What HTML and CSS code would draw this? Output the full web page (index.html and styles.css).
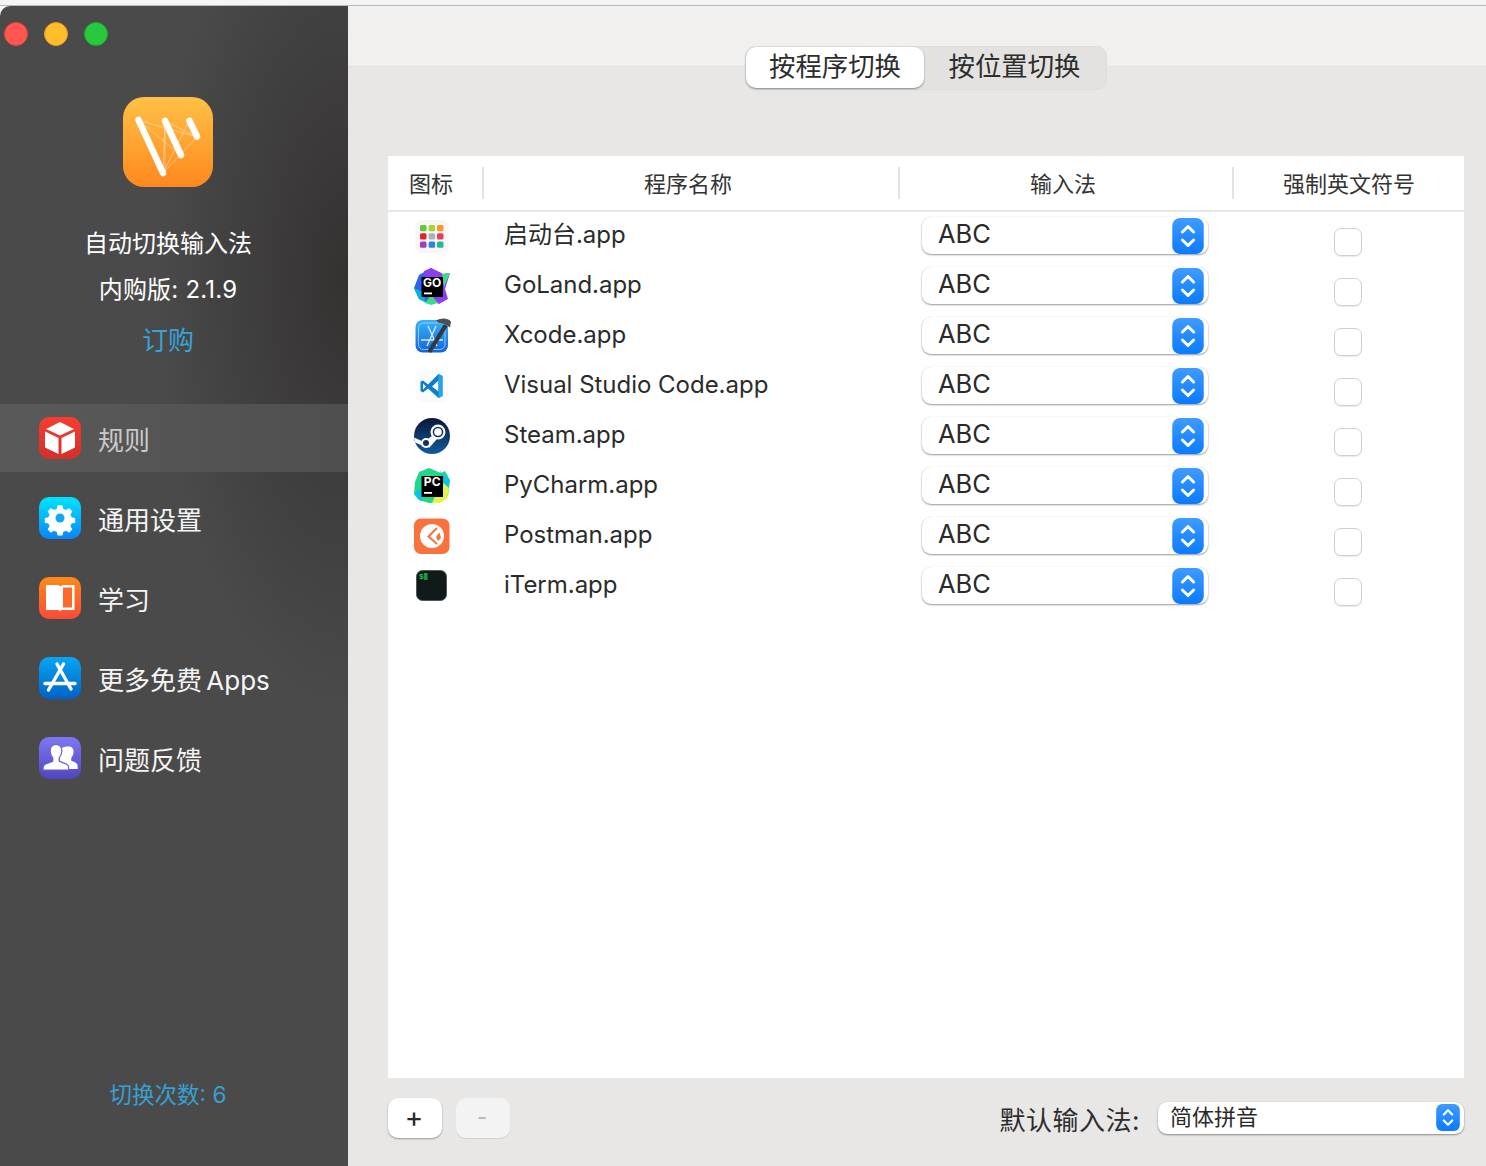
FILE: index.html
```html
<!DOCTYPE html>
<html lang="zh-CN">
<head>
<meta charset="utf-8">
<title>自动切换输入法</title>
<link rel="stylesheet" href="styles.css">
</head>
<body>
<svg class="defs" width="0" height="0" aria-hidden="true">
  <defs>
    <linearGradient id="gLogo" x1="0" y1="0" x2="0" y2="1"><stop offset="0" stop-color="#ffc145"/><stop offset="1" stop-color="#ff881f"/></linearGradient>
    <linearGradient id="gRed" x1="0" y1="0" x2="0" y2="1"><stop offset="0" stop-color="#f63d30"/><stop offset="1" stop-color="#d3302b"/></linearGradient>
    <linearGradient id="gCyan" x1="0" y1="0" x2="0" y2="1"><stop offset="0" stop-color="#00e4fb"/><stop offset="1" stop-color="#0a84ff"/></linearGradient>
    <linearGradient id="gOrange" x1="0" y1="0" x2="0" y2="1"><stop offset="0" stop-color="#ff8a16"/><stop offset="1" stop-color="#fb4a3c"/></linearGradient>
    <linearGradient id="gBlue" x1="0" y1="0" x2="0" y2="1"><stop offset="0" stop-color="#07a6f2"/><stop offset="1" stop-color="#0062c8"/></linearGradient>
    <linearGradient id="gViolet" x1="0" y1="0" x2="0" y2="1"><stop offset="0" stop-color="#7f78f5"/><stop offset="1" stop-color="#4f46bd"/></linearGradient>
    <linearGradient id="gXcode" x1="0" y1="0" x2="0" y2="1"><stop offset="0" stop-color="#35b4f6"/><stop offset="1" stop-color="#1662e0"/></linearGradient>
    <linearGradient id="gSteam" x1="0" y1="0" x2="0" y2="1"><stop offset="0" stop-color="#0c1638"/><stop offset="1" stop-color="#0f5b9c"/></linearGradient>
    <linearGradient id="gStep" x1="0" y1="0" x2="0" y2="1"><stop offset="0" stop-color="#3f9bff"/><stop offset="1" stop-color="#0a7bff"/></linearGradient>
    <filter id="fGlow" x="-40%" y="-40%" width="180%" height="180%"><feGaussianBlur stdDeviation="0.7"/></filter>
    <symbol id="stepper" viewBox="0 0 28 32">
      <rect width="28" height="32" rx="7" fill="url(#gStep)"/>
      <path d="M9 12.500 14 7.500l5 5M9 19.500l5 5 5-5" fill="none" stroke="#fff" stroke-width="2.600" stroke-linecap="round" stroke-linejoin="round"/>
    </symbol>
  </defs>
</svg>

<div class="top-strip"></div>
<div class="window">
  <aside class="sidebar">
    <div class="lights">
      <span class="light light-red"></span>
      <span class="light light-yellow"></span>
      <span class="light light-green"></span>
    </div>
    <svg class="logo" viewBox="0 0 90 90" width="90" height="90">
      <rect width="90" height="90" rx="21" fill="url(#gLogo)"/>
      <g stroke="#ffe9cf" stroke-width=".6" fill="none" opacity=".85">
        <path d="M15 23 74 40 40 76 42 24 74 40"/>
        <path d="M40 76 66 24M15 23 58 58M42 24 42 76"/>
      </g>
      <g stroke="#fff" stroke-width="6.500" stroke-linecap="round" filter="url(#fGlow)">
        <path d="M15.500 23 40 76"/>
        <path d="M42 24 58 58"/>
        <path d="M66.500 24 74 39.500"/>
      </g>
    </svg>
    <div class="app-title">自动切换输入法</div>
    <div class="app-version">内购版: 2.1.9</div>
    <div class="app-buy">订购</div>

    <nav class="nav">
      <div class="nav-item is-active">
        <svg class="nav-icon" viewBox="0 0 42 42" width="42" height="42">
          <rect width="42" height="42" rx="10" fill="url(#gRed)"/>
          <path d="M21 5 35 12 21 18.500 7 12Z" fill="#fff"/>
          <path d="M6 14.500 19.500 21V37L6 30.500Z" fill="#fff"/>
          <path d="M36 14.500 22.500 21V37L36 30.500Z" fill="#fff"/>
        </svg>
        <span class="nav-label">规则</span>
      </div>
      <div class="nav-item">
        <svg class="nav-icon" viewBox="0 0 42 42" width="42" height="42">
          <rect width="42" height="42" rx="10" fill="url(#gCyan)"/>
          <path d="M18 5h6l1 4.500 3.500 1.500 4-2.500 4 4.500-2.500 3.700 1.500 3.300 4.500 1v6l-4.500 1-1.500 3.300 2.500 3.700-4 4.500-4-2.500-3.500 1.500-1 4.500h-6l-1-4.500-3.500-1.500-4 2.500-4-4.500 2.500-3.700-1.500-3.300-4.500-1v-6l4.500-1 1.500-3.300-2.500-3.700 4-4.500 4 2.500 3.500-1.500z" fill="#fff" transform="translate(4.200 4.200) scale(.8)"/>
          <circle cx="21" cy="21" r="4.500" fill="#0ea8f8"/>
        </svg>
        <span class="nav-label">通用设置</span>
      </div>
      <div class="nav-item">
        <svg class="nav-icon" viewBox="0 0 42 42" width="42" height="42">
          <rect width="42" height="42" rx="10" fill="url(#gOrange)"/>
          <path d="M7 8h12.500l2 1.500 2-1.500H35.500V33H23l-2 1-2-1H7Z" fill="#fff"/>
          <rect x="24" y="10.500" width="9" height="20" fill="#fb6a2a"/>
        </svg>
        <span class="nav-label">学习</span>
      </div>
      <div class="nav-item">
        <svg class="nav-icon" viewBox="0 0 42 42" width="42" height="42">
          <rect width="42" height="42" rx="10" fill="url(#gBlue)"/>
          <g stroke="#fff" stroke-width="3.400" stroke-linecap="round" fill="none">
            <path d="M24.500 7 9.500 33"/>
            <path d="M18 7 32 32"/>
            <path d="M6 26.500H36"/>
          </g>
        </svg>
        <span class="nav-label nav-label-mixed">更多免费 Apps</span>
      </div>
      <div class="nav-item">
        <svg class="nav-icon" viewBox="0 0 42 42" width="42" height="42">
          <rect width="42" height="42" rx="10" fill="url(#gViolet)"/>
          <path d="M30 9.500c3.200 0 5 2.800 4.500 6-.3 2.500-1.300 4.400-2.300 5.500v2.500c1 1 5.800 1.800 6.300 4.300.2 1.200.2 3.200.2 4.200H29c0-3-2-5-8-6.500V20c-1-1.500-1.200-3-1-5 .4-3 2.500-5.500 10-5.500Z" fill="#fff"/>
          <path d="M17 7.500c4 0 6.200 3 5.800 7-.3 3-1.300 5-2.600 6.300V24c1.300 1.500 7.300 2 8.800 4.500.7 1.300.8 3.500.8 4.500H4c0-1 .1-3.200.8-4.500C6.300 26 12.500 25.500 13.800 24v-3.200c-1.300-1.300-2.300-3.300-2.600-6.300-.4-4 1.800-7 5.800-7Z" fill="#fff" stroke="#6660dc" stroke-width="1.200"/>
        </svg>
        <span class="nav-label">问题反馈</span>
      </div>
    </nav>

    <div class="switch-count">切换次数: 6</div>
  </aside>

  <main class="main">
    <header class="titlebar">
      <div class="segmented">
        <div class="segment is-active">按程序切换</div>
        <div class="segment">按位置切换</div>
      </div>
    </header>

    <section class="content">
      <div class="table">
        <div class="table-head">
          <div class="th th-icon">图标</div>
          <div class="th th-name">程序名称</div>
          <div class="th th-input">输入法</div>
          <div class="th th-force">强制英文符号</div>
        </div>

        <div class="row">
          <svg class="app-icon" viewBox="0 0 36 36" width="36" height="36">
            <rect x="1.500" y="2" width="33" height="33" rx="7" fill="#f6f6f6"/>
            <rect x="6" y="7" width="6.500" height="6.200" rx="1.500" fill="#5fca3c"/>
            <rect x="14.600" y="7" width="6.500" height="6.200" rx="1.500" fill="#a9d334"/>
            <rect x="23" y="7" width="6.500" height="6.200" rx="1.500" fill="#f59a23"/>
            <rect x="6" y="15.300" width="6.500" height="6.200" rx="1.500" fill="#df2427"/>
            <rect x="14.600" y="15.300" width="6.500" height="6.200" rx="1.500" fill="#aab2b2"/>
            <rect x="23" y="15.300" width="6.500" height="6.200" rx="1.500" fill="#ee3a63"/>
            <rect x="6" y="23.600" width="6.500" height="6.200" rx="1.500" fill="#9a3fc2"/>
            <rect x="14.600" y="23.600" width="6.500" height="6.200" rx="1.500" fill="#2a85e2"/>
            <rect x="23" y="23.600" width="6.500" height="6.200" rx="1.500" fill="#25b98f"/>
          </svg>
          <div class="app-name">启动台.app</div>
          <div class="select"><span class="select-text">ABC</span><svg class="stepper" width="32" height="36"><use href="#stepper"/></svg></div>
          <div class="check-cell"><span class="checkbox"></span></div>
        </div>

        <div class="row">
          <svg class="app-icon" viewBox="0 0 36 36" width="36" height="36">
            <path d="M0 20 5 7 12 3 17 0 29 6 27 24 16 36 5 31Z" fill="#2f62ee"/>
            <path d="M10 3 17 0 29 6 36 5 31 21 34 31 25 36 14 30Z" fill="#8c3ef0"/>
            <path d="M28 6 36 5 30 19Z" fill="#3ddc84"/>
            <path d="M0 20 9 24 12 35 5 31Z" fill="#07b4d8"/>
            <path d="M11 35 17 27 24 35 17 37Z" fill="#3ddc84"/>
            <rect x="7.500" y="9" width="21.500" height="20" fill="#000"/>
            <text class="ide-text" x="18.200" y="19">GO</text>
            <rect x="10" y="24.500" width="8" height="1.800" fill="#fff"/>
          </svg>
          <div class="app-name">GoLand.app</div>
          <div class="select"><span class="select-text">ABC</span><svg class="stepper" width="32" height="36"><use href="#stepper"/></svg></div>
          <div class="check-cell"><span class="checkbox"></span></div>
        </div>

        <div class="row">
          <svg class="app-icon" viewBox="0 0 36 36" width="36" height="36">
            <rect x="1.500" y="2" width="32.500" height="32.500" rx="7" fill="url(#gXcode)"/>
            <rect x="4.500" y="5" width="26.500" height="26.500" rx="5" fill="none" stroke="#a5dcff" stroke-width=".8"/>
            <g stroke="#cfeaff" stroke-width="1.400" fill="none">
              <path d="M14 8 23 28M22 8 13 28M7 22H29"/>
            </g>
            <path d="M30 6 33.500 8.500 17 35 13.500 33Z" fill="#33373e"/>
            <path d="M22 2.500C27 0 33-.5 37 3.500L36 9.500 31 6 25 5Z" fill="#4a4f58"/>
          </svg>
          <div class="app-name">Xcode.app</div>
          <div class="select"><span class="select-text">ABC</span><svg class="stepper" width="32" height="36"><use href="#stepper"/></svg></div>
          <div class="check-cell"><span class="checkbox"></span></div>
        </div>

        <div class="row">
          <svg class="app-icon" viewBox="0 0 36 36" width="36" height="36">
            <rect x="1.500" y="2" width="33" height="33" rx="7" fill="#fbfbfb"/>
            <path d="M24.500 6 28.500 8V28L24.500 30 14 20.500 9 24.500 6.500 23V13.500L9 12.500 14 16.500Z" fill="#0a7fd0"/>
            <path d="M24.500 12.500 18 18.500 24.500 23.500Z" fill="#fff"/>
            <path d="M9 15.500 12 18.500 9 21.500Z" fill="#fff"/>
            <path d="M24.500 6 28.500 8V28L24.500 30Z" fill="#25a3ec"/>
          </svg>
          <div class="app-name">Visual Studio Code.app</div>
          <div class="select"><span class="select-text">ABC</span><svg class="stepper" width="32" height="36"><use href="#stepper"/></svg></div>
          <div class="check-cell"><span class="checkbox"></span></div>
        </div>

        <div class="row">
          <svg class="app-icon" viewBox="0 0 36 36" width="36" height="36">
            <circle cx="18" cy="18" r="18" fill="url(#gSteam)"/>
            <path d="M0 19.500 10 24 19 17 23 21 15.500 29.500 9 29 7 27 1.200 24.500Z" fill="#fff"/>
            <circle cx="24" cy="14" r="7.500" fill="#fff"/>
            <circle cx="24" cy="14" r="5.300" fill="#17305f"/>
            <circle cx="24" cy="14" r="3.800" fill="#fff"/>
            <circle cx="12" cy="25" r="5" fill="#fff"/>
            <circle cx="12" cy="25" r="3" fill="#17305f"/>
          </svg>
          <div class="app-name">Steam.app</div>
          <div class="select"><span class="select-text">ABC</span><svg class="stepper" width="32" height="36"><use href="#stepper"/></svg></div>
          <div class="check-cell"><span class="checkbox"></span></div>
        </div>

        <div class="row">
          <svg class="app-icon" viewBox="0 0 36 36" width="36" height="36">
            <path d="M1 14 5 4 15 0 27 5 31 3 36 12 34 28 25 35 15 35 5 32 0 26Z" fill="#21d789"/>
            <path d="M26 2 28 6 36 12 34 20 28 12Z" fill="#07c3f2"/>
            <path d="M18 35 28 14 35 20 33 31 25 35Z" fill="#e8f24a"/>
            <path d="M0 26 6 20 8 33 5 32Z" fill="#07c3f2"/>
            <rect x="7.500" y="8" width="21.500" height="21" fill="#000"/>
            <text class="ide-text" x="18.200" y="18">PC</text>
            <rect x="10" y="24" width="8" height="1.800" fill="#fff"/>
          </svg>
          <div class="app-name">PyCharm.app</div>
          <div class="select"><span class="select-text">ABC</span><svg class="stepper" width="32" height="36"><use href="#stepper"/></svg></div>
          <div class="check-cell"><span class="checkbox"></span></div>
        </div>

        <div class="row">
          <svg class="app-icon" viewBox="0 0 36 36" width="36" height="36">
            <rect y="0.500" width="35.500" height="35.500" rx="7" fill="#f9723d"/>
            <circle cx="18" cy="18" r="12" fill="#fff"/>
            <path d="M23 10 14.500 18.500 23 26" fill="none" stroke="#f9723d" stroke-width="2"/>
            <path d="M25.500 14.500 27 20 24 23 22 19Z" fill="#f9723d"/>
          </svg>
          <div class="app-name">Postman.app</div>
          <div class="select"><span class="select-text">ABC</span><svg class="stepper" width="32" height="36"><use href="#stepper"/></svg></div>
          <div class="check-cell"><span class="checkbox"></span></div>
        </div>

        <div class="row">
          <svg class="app-icon" viewBox="0 0 36 36" width="36" height="36">
            <rect x="2.500" y="2.500" width="30" height="30" rx="6" fill="#111a1a" stroke="#555" stroke-width="1"/>
            <text class="term-text" x="5" y="10.500">$</text>
            <rect x="10" y="5" width="3.600" height="7" fill="#149a3f"/>
          </svg>
          <div class="app-name">iTerm.app</div>
          <div class="select"><span class="select-text">ABC</span><svg class="stepper" width="32" height="36"><use href="#stepper"/></svg></div>
          <div class="check-cell"><span class="checkbox"></span></div>
        </div>
      </div>

      <footer class="footer">
        <div class="btn">+</div>
        <div class="btn is-disabled">-</div>
        <div class="spacer"></div>
        <div class="default-label">默认输入法:</div>
        <div class="select select-small"><span class="select-text">简体拼音</span><svg class="stepper" width="24" height="27"><use href="#stepper"/></svg></div>
      </footer>
    </section>
  </main>
</div>
</body>
</html>
```

FILE: styles.css
```css
* { box-sizing: border-box; }
html, body { margin: 0; padding: 0; }
body {
  width: 1486px;
  height: 1166px;
  overflow: hidden;
  background: #f6f6f6;
  font-family: Inter, "Noto Sans CJK SC", sans-serif;
  color: #2a2a2a;
}
.defs { display: block; height: 0; }
.top-strip { height: 6px; border-bottom: 1px solid #b9b9b9; background: #f4f4f4; }
.window { display: flex; height: 1160px; }

.sidebar {
  width: 348px;
  flex: none;
  display: flex;
  flex-direction: column;
  align-items: center;
  padding-right: 12px;
  border-top-left-radius: 10px;
  color: #fff;
  background:
    radial-gradient(ellipse 190px 430px at 100% 270px, #343131 0%, rgba(52,49,49,0) 100%),
    #4a4a4a;
}
.lights { align-self: flex-start; display: flex; gap: 16px; padding: 16px 0 0 4px; }
.light { width: 24px; height: 24px; border-radius: 50%; }
.light-red { background: #ff5652; border: 1px solid #e0443e; }
.light-yellow { background: #ffbd2a; border: 1px solid #dea123; }
.light-green { background: #28c83f; border: 1px solid #1aab29; }
.logo { display: block; margin-top: 51px; }
.app-title { margin-top: 40px; font-size: 24px; line-height: 34px; }
.app-version { margin-top: 12px; font-size: 24px; line-height: 34px; letter-spacing: .2px; }
.app-buy { margin-top: 15px; font-size: 26px; line-height: 38px; color: #37a3d6; }

.nav { align-self: stretch; margin: 44px -12px 0 0; display: flex; flex-direction: column; gap: 12px; }
.nav-item { display: flex; align-items: center; height: 68px; padding-left: 39px; gap: 17px; }
.nav-item.is-active { background: linear-gradient(90deg, #5a5a5a, #4f4f4f); }
.nav-item.is-active .nav-label { color: #c9c9c9; }
.nav-icon { flex: none; position: relative; top: 0; }
.nav-label { font-size: 26px; line-height: 36px; color: #f5f5f5; position: relative; top: 3px; }
.nav-label-mixed { word-spacing: -3px; }
.switch-count { margin-top: auto; margin-bottom: 55px; font-size: 22.500px; line-height: 32px; color: #37a0d2; }

.main { flex: 1; display: flex; flex-direction: column; padding: 0; }
.titlebar {
  position: relative;
  z-index: 1;
  height: 61px;
  flex: none;
  display: flex;
  justify-content: center;
  align-items: flex-start;
  padding: 40px 22px 0 40px;
  background: #f1f0ef;
  border-bottom: 1px solid #e2e1df;
}
.segmented {
  flex: none;
  display: flex;
  height: 44px;
  width: 362px;
  padding: 1px;
  border-radius: 11px;
  background: #e3e2e0;
  box-shadow: inset 0 0 0 1px #dededc;
}
.segment { flex: none; width: 178px; text-align: center; font-size: 26.400px; line-height: 39px; color: #2d2d2d; }
.segment + .segment { width: 181px; }
.segment.is-active { background: #fff; border-radius: 10px; box-shadow: 0 1px 2px rgba(0,0,0,.4); height: 41px; }

.content { flex: 1; min-height: 0; display: flex; flex-direction: column; background: #e8e7e5; padding: 89px 22px 0 40px; }
.table { flex: none; height: 922px; background: #fff; }
.table-head {
  display: grid;
  grid-template-columns: 96px 416px 334px 230px;
  height: 56px;
  align-items: center;
  border-bottom: 2px solid #e6e6e6;
}
.th { height: 32px; line-height: 34px; font-size: 22px; text-align: center; color: #333; border-right: 2px solid #e3e3e3; padding-right: 6px; }
.th-icon { text-align: left; padding-left: 21px; }
.th-force { border-right: 0; padding-right: 0; }

.row {
  display: grid;
  grid-template-columns: 95px 416px 334px 231px;
  height: 50px;
  align-items: start;
}
.app-icon { display: block; margin: 6px 0 0 26px; overflow: visible; }
.app-name { padding-left: 21px; font-size: 24px; line-height: 36px; margin-top: 5px; color: #2b2b2b; letter-spacing: -.02px; }
.select {
  display: flex;
  align-items: center;
  justify-content: space-between;
  width: 286px;
  height: 37px;
  margin: 5px 0 0 23px;
  padding: 0 4px 0 16px;
  background: #fff;
  border-radius: 9px;
  box-shadow: 0 1px 2px rgba(0,0,0,.4), 0 0 1px rgba(0,0,0,.15);
}
.select-text { font-size: 25.500px; line-height: 34px; color: #2a2a2a; position: relative; top: -2px; }
.stepper { display: block; flex: none; }
.check-cell { display: flex; justify-content: center; padding-right: 2px; }
.checkbox {
  width: 28px;
  height: 28px;
  margin-top: 16px;
  border-radius: 7px;
  background: #fff;
  border: 1px solid #cfcfcf;
  box-shadow: 0 1px 1px rgba(0,0,0,.08);
}
.ide-text { font: 700 12px Inter, sans-serif; fill: #fff; text-anchor: middle; }
.term-text { font: 700 8px "Liberation Mono", monospace; fill: #27c24c; }

.footer { display: flex; align-items: center; flex: 1; padding-bottom: 9px; }
.btn {
  width: 54px;
  height: 40px;
  margin-right: 14px;
  text-align: center;
  font-size: 28px;
  line-height: 38px;
  background: #fff;
  color: #2a2a2a;
  border-radius: 10px;
  box-shadow: 0 1px 2px rgba(0,0,0,.35);
  padding-right: 2px;
}
.btn.is-disabled { background: #f3f3f3; color: #b5b5b5; box-shadow: 0 1px 1px rgba(0,0,0,.1); font-size: 22px; }
.spacer { flex: 1; }
.default-label { font-size: 26px; line-height: 36px; color: #2d2d2d; margin-right: 18px; letter-spacing: .5px; position: relative; top: 3px; }
.select-small { width: 306px; height: 32px; margin: 0; padding: 0 4px 0 12px; }
.select-small .select-text { font-size: 22px; line-height: 30px; top: -1px; }
```
